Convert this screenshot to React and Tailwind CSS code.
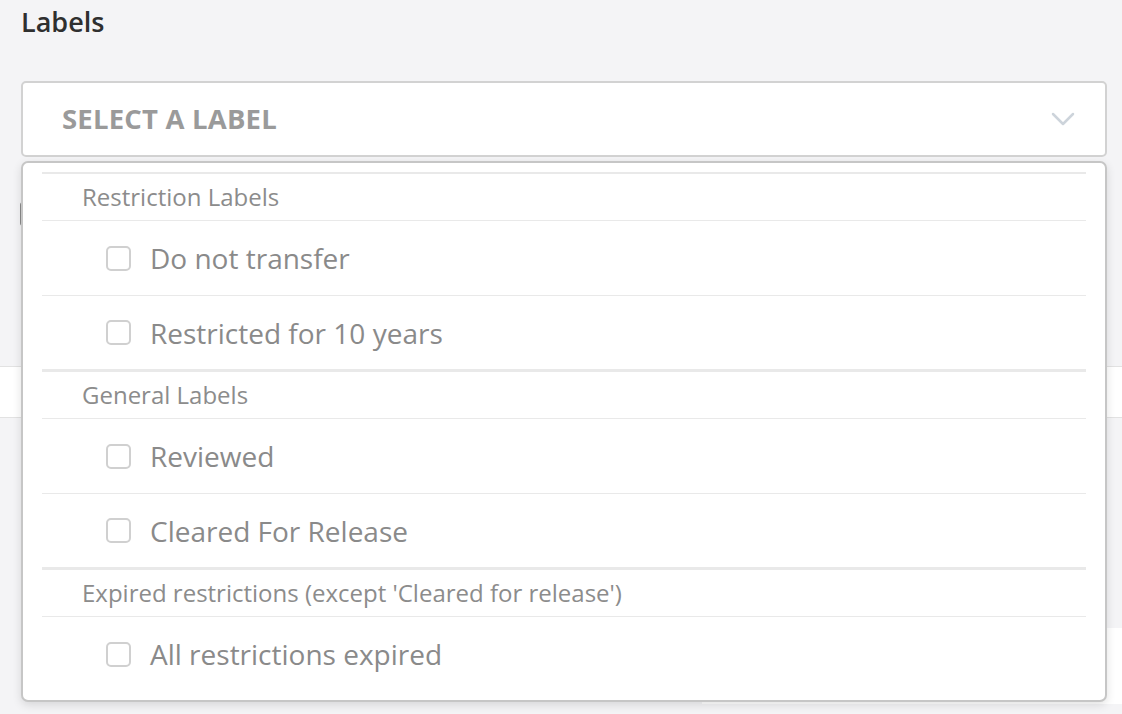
import React, { useState } from "react";

const groups = [
  {
    title: "Restriction Labels",
    items: ["Do not transfer", "Restricted for 10 years"],
  },
  {
    title: "General Labels",
    items: ["Reviewed", "Cleared For Release"],
  },
  {
    title: "Expired restrictions (except 'Cleared for release')",
    items: ["All restrictions expired"],
  },
];

const Chevron = () => (
  <svg width="24" height="14" viewBox="0 0 24 14" fill="none">
    <path d="M2 2l10 10L22 2" stroke="#cdd4db" strokeWidth="2.5" strokeLinecap="round" strokeLinejoin="round" />
  </svg>
);

const App = () => {
  const [checked, setChecked] = useState({});

  const toggle = (name) => {
    setChecked((prev) => ({ ...prev, [name]: !prev[name] }));
  };

  return (
    <div
      className="w-full min-h-[714px] bg-[#f4f4f6] overflow-hidden"
      style={{ fontFamily: '"Open Sans", "Noto Sans", sans-serif' }}
    >
      {/* Header */}
      <div className="px-[21px] pt-[4px]">
        <h2 className="text-[27px] leading-[36px] font-semibold text-[#2f2f2f]">Labels</h2>
      </div>

      <div className="relative ml-[21px] mr-[15px] mt-[41px]">
        {/* Select */}
        <div className="h-[76px] flex items-center justify-between bg-white border-2 border-[#d2d2d2] rounded-[5px] pl-[39px] pr-[30px]">
          <span className="text-[27.5px] font-bold text-[#9a9a9a] tracking-[0.2px]">SELECT A LABEL</span>
          <Chevron />
        </div>

        {/* Content underneath the menu */}
        <div className="pt-[45px]">
          <div className="-ml-[1px] w-[20px] h-[24px] bg-[#8a8a8a] rounded-[3px]" />
          <div className="mt-[140px] h-[52px] bg-white border-y border-[#e2e2e2] -ml-[21px] -mr-[15px]" />
          <div className="mt-[210px] ml-auto w-[420px] h-[76px] bg-white -mr-[15px]" />
        </div>

        {/* Dropdown menu */}
        <div className="absolute left-0 right-0 top-[80px] bg-white border-2 border-[#c6c6c6] rounded-[7px] shadow-[0_3px_10px_rgba(0,0,0,0.12)] px-[19px] pt-[9px] pb-[9px]">
          {groups.map((group, gi) => (
            <div
              key={group.title}
              className={gi === 0 ? "border-t-2 border-[#e9e9e9]" : "border-t-[3px] border-[#e9e9e9]"}
            >
              <div className="h-[47px] flex items-center pl-[40px] border-b border-[#e9e9e9] text-[24px] text-[#8c8c8c]">
                {group.title}
              </div>
              {group.items.map((item, ii) => (
                <label
                  key={item}
                  className={`h-[74px] flex items-center pl-[64px] cursor-pointer ${ii > 0 ? "border-t border-[#e9e9e9]" : ""}`}
                  onClick={() => toggle(item)}
                >
                  <span
                    className={`w-[25px] h-[25px] rounded-[5px] border-2 border-[#d0d0d0] ${checked[item] ? "bg-[#d0d0d0]" : "bg-white"}`}
                  />
                  <span className="ml-[19px] text-[28px] text-[#8a8a8a]">{item}</span>
                </label>
              ))}
            </div>
          ))}
        </div>
      </div>
    </div>
  );
};

export default App;
